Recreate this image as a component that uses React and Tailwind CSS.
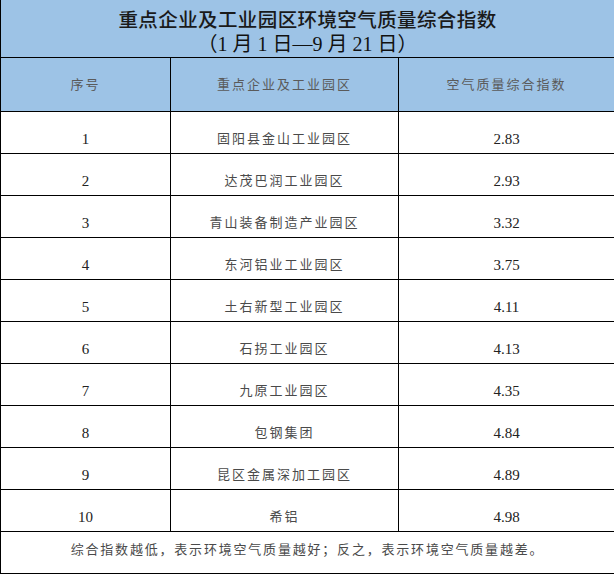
import React from "react";

const rows = [
  ["1", "固阳县金山工业园区", "2.83"],
  ["2", "达茂巴润工业园区", "2.93"],
  ["3", "青山装备制造产业园区", "3.32"],
  ["4", "东河铝业工业园区", "3.75"],
  ["5", "土右新型工业园区", "4.11"],
  ["6", "石拐工业园区", "4.13"],
  ["7", "九原工业园区", "4.35"],
  ["8", "包钢集团", "4.84"],
  ["9", "昆区金属深加工园区", "4.89"],
  ["10", "希铝", "4.98"],
];

const cjk = { fontFamily: '"Liberation Serif", "Noto Sans CJK SC", serif' };

export default function App() {
  return (
    <div className="w-[614px] h-[577px] bg-white" style={cjk}>
      <div className="w-[614px] border-l border-black">
        <div className="h-[58px] bg-[#9dc3e6] border-b border-black flex flex-col items-center pt-[6px] text-[#1a1a1a]">
          <div className="text-[19.5px] leading-[26px] font-medium tracking-[0.4px]" style={{ fontFamily: '"Noto Sans CJK SC", sans-serif' }}>
            重点企业及工业园区环境空气质量综合指数
          </div>
          <div className="text-[20px] leading-[24px] font-normal text-[#111]">（1 月 1 日—9 月 21 日）</div>
        </div>
        <div className="h-[54px] bg-[#9dc3e6] border-b border-black flex text-[13px] text-[#5a5a5a] tracking-[2px]">
          <div className="w-[170px] border-r border-black flex items-center justify-center">序号</div>
          <div className="w-[228px] border-r border-black flex items-center justify-center">重点企业及工业园区</div>
          <div className="flex-1 flex items-center justify-center">空气质量综合指数</div>
        </div>
        {rows.map(([n, name, v]) => (
          <div key={n} className="h-[42px] border-b border-black flex leading-[20px]">
            <div className="w-[170px] border-r border-black flex justify-center pt-[17px] text-[15px] text-[#222]">{n}</div>
            <div className="w-[228px] border-r border-black flex justify-center pt-[17px] text-[13px] text-[#4a4a4a] tracking-[2px]">{name}</div>
            <div className="flex-1 flex justify-center pt-[17px] text-[15px] text-[#222]">{v}</div>
          </div>
        ))}
        <div className="h-[42px] border-b border-black flex justify-center pt-[8px] leading-[20px] text-[13px] text-[#4a4a4a] tracking-[1.8px]">
          综合指数越低，表示环境空气质量越好；反之，表示环境空气质量越差。
        </div>
      </div>
    </div>
  );
}
